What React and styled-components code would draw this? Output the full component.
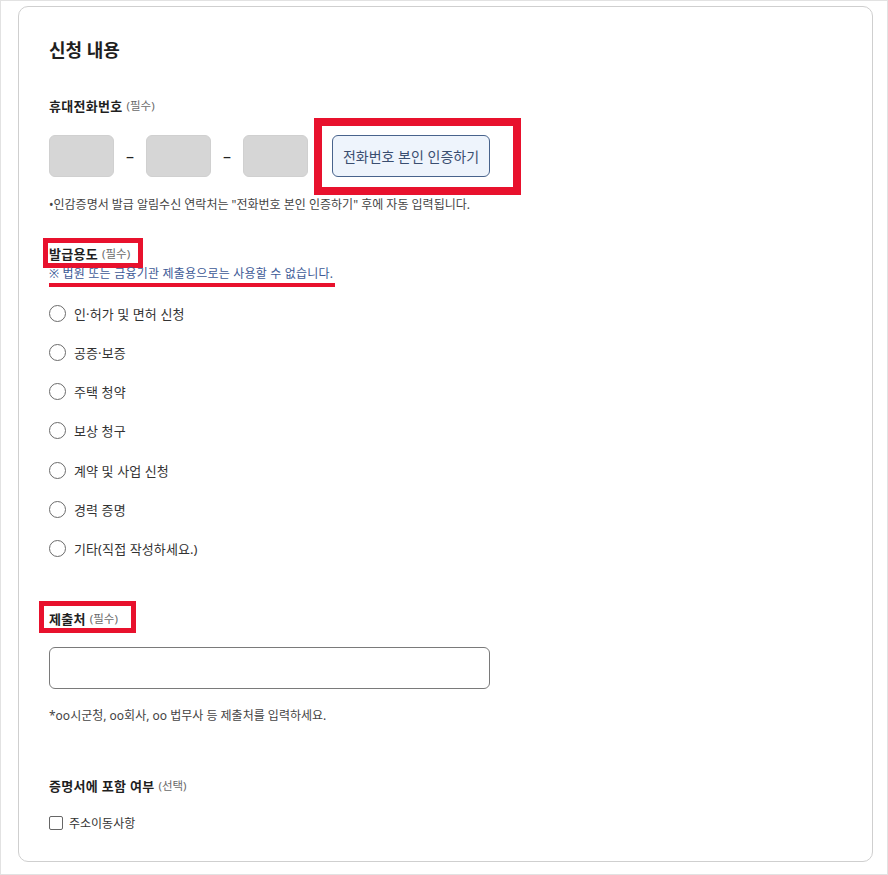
import React, { useState } from 'react';
import styled, { createGlobalStyle } from 'styled-components';

const GlobalStyle = createGlobalStyle`
  html, body {
    margin: 0;
    padding: 0;
    background: #ffffff;
  }
  body {
    font-family: "Noto Sans", "Noto Sans CJK KR", sans-serif;
    color: #222;
  }
  * {
    box-sizing: border-box;
  }
`;

const Page = styled.div`
  width: 888px;
  height: 875px;
  border: 1px solid #e2e2e2;
  padding: 5px 14px 12px 17px;
`;

const Card = styled.section`
  height: 856px;
  border: 1px solid #cfcfcf;
  border-radius: 10px;
  padding: 31px 30px 0 30px;
  display: flex;
  flex-direction: column;
  align-items: flex-start;
`;

const Title = styled.h2`
  margin: 0;
  height: 24px;
  font-size: 18px;
  line-height: 24px;
  font-weight: 700;
  color: #1f1f1f;
`;

const Label = styled.div`
  margin-top: ${(p) => p.$mt || 0}px;
  height: 18px;
  display: flex;
  align-items: center;
  gap: 4px;
  font-size: 13px;
  line-height: 18px;
  font-weight: 700;
  letter-spacing: 0.3px;
  color: #1f1f1f;
  white-space: nowrap;
`;

const Hint = styled.span`
  font-size: 11.5px;
  font-weight: 400;
  color: #6a6a6a;
  letter-spacing: 0;
`;

const Highlight = styled.span`
  position: relative;
  display: inline-flex;
  align-items: center;
  gap: 4px;

  &::after {
    content: '';
    position: absolute;
    top: -${(p) => p.$t}px;
    right: -${(p) => p.$r}px;
    bottom: -${(p) => p.$b}px;
    left: -${(p) => p.$l}px;
    border: ${(p) => p.$w}px solid #e8112d;
    pointer-events: none;
  }
`;

const PhoneRow = styled.div`
  margin-top: 20px;
  height: 42px;
  display: flex;
  align-items: center;
`;

const PhoneBox = styled.input`
  width: 65px;
  height: 42px;
  border: 1px solid #d0d0d0;
  border-radius: 6px;
  background: #d6d6d6;
  outline: none;
`;

const Dash = styled.span`
  width: 32px;
  text-align: center;
  font-size: 16px;
  color: #222;
`;

const VerifyButton = styled.button`
  width: 158px;
  height: 42px;
  border: 1px solid #48638c;
  border-radius: 6px;
  background: #eef4fc;
  color: #3a4e70;
  font-family: inherit;
  font-size: 14px;
  cursor: pointer;
`;

const Note = styled.p`
  margin: ${(p) => p.$mt || 0}px 0 0;
  height: 16px;
  font-size: 12px;
  line-height: 16px;
  color: #444;
  white-space: nowrap;
`;

const Warning = styled.p`
  position: relative;
  margin: 3px 0 0;
  height: 16px;
  font-size: 12px;
  line-height: 16px;
  letter-spacing: 0.2px;
  color: #3d5a96;
  white-space: nowrap;

  &::after {
    content: '';
    position: absolute;
    left: 0;
    right: -2px;
    bottom: -5px;
    height: 4px;
    background: #e8112d;
  }
`;

const RadioList = styled.div`
  margin-top: 21px;
  display: flex;
  flex-direction: column;
  gap: 19.3px;
`;

const RadioRow = styled.label`
  display: flex;
  align-items: center;
  height: 20px;
  gap: 8px;
  font-size: 13px;
  letter-spacing: 0.1px;
  color: #333;
  cursor: pointer;
`;

const RadioDot = styled.span`
  width: 17px;
  height: 17px;
  border-radius: 50%;
  border: 1px solid #6b6b6b;
  background: #fff;
  display: flex;
  align-items: center;
  justify-content: center;

  &::after {
    content: '';
    width: 9px;
    height: 9px;
    border-radius: 50%;
    background: ${(p) => (p.$on ? '#3a4e70' : 'transparent')};
  }
`;

const TextField = styled.input`
  margin-top: 19px;
  width: 441px;
  height: 42px;
  border: 1px solid #7a7a7a;
  border-radius: 6px;
  background: #fff;
  outline: none;
  padding: 0 12px;
  font-family: inherit;
  font-size: 13px;
`;

const CheckRow = styled.label`
  margin-top: 18px;
  display: flex;
  align-items: center;
  height: 20px;
  gap: 6px;
  font-size: 12px;
  color: #333;
  cursor: pointer;
`;

const CheckBox = styled.span`
  width: 14px;
  height: 14px;
  border: 1px solid #666;
  border-radius: 2px;
  background: ${(p) => (p.$on ? '#3a4e70' : '#fff')};
`;

const purposes = [
  '인·허가 및 면허 신청',
  '공증·보증',
  '주택 청약',
  '보상 청구',
  '계약 및 사업 신청',
  '경력 증명',
  '기타(직접 작성하세요.)',
];

const App = () => {
  const [purpose, setPurpose] = useState(null);
  const [withAddress, setWithAddress] = useState(false);

  return (
    <>
      <GlobalStyle />
      <Page>
        <Card>
          <Title>신청 내용</Title>

          <Label $mt={35}>
            휴대전화번호 <Hint>(필수)</Hint>
          </Label>
          <PhoneRow>
            <PhoneBox />
            <Dash>–</Dash>
            <PhoneBox />
            <Dash>–</Dash>
            <PhoneBox />
            <Highlight $t={17} $r={31} $b={18} $l={18} $w={8} style={{ marginLeft: 24 }}>
              <VerifyButton>전화번호 본인 인증하기</VerifyButton>
            </Highlight>
          </PhoneRow>
          <Note $mt={20}>•인감증명서 발급 알림수신 연락처는 "전화번호 본인 인증하기" 후에 자동 입력됩니다.</Note>

          <Label $mt={32}>
            <Highlight $t={7} $r={13} $b={5} $l={6} $w={5}>
              발급용도 <Hint>(필수)</Hint>
            </Highlight>
          </Label>
          <Warning>※ 법원 또는 금융기관 제출용으로는 사용할 수 없습니다.</Warning>

          <RadioList>
            {purposes.map((item, i) => (
              <RadioRow key={item} onClick={() => setPurpose(i)}>
                <RadioDot $on={purpose === i} />
                {item}
              </RadioRow>
            ))}
          </RadioList>

          <Label $mt={51}>
            <Highlight $t={9} $r={18} $b={5} $l={10} $w={5}>
              제출처 <Hint>(필수)</Hint>
            </Highlight>
          </Label>
          <TextField />
          <Note $mt={19}>*oo시군청, oo회사, oo 법무사 등 제출처를 입력하세요.</Note>

          <Label $mt={53}>
            증명서에 포함 여부 <Hint>(선택)</Hint>
          </Label>
          <CheckRow onClick={() => setWithAddress(!withAddress)}>
            <CheckBox $on={withAddress} />
            주소이동사항
          </CheckRow>
        </Card>
      </Page>
    </>
  );
};

export default App;
